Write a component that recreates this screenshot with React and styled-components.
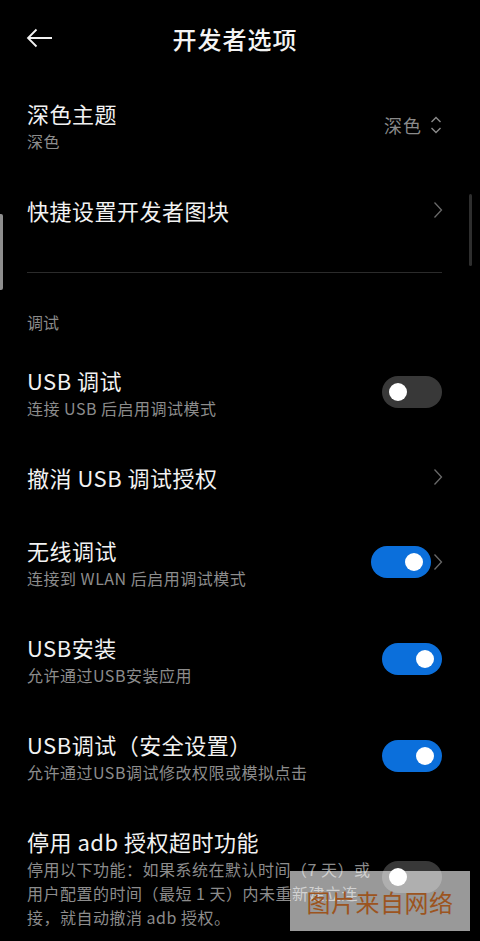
import styled, { createGlobalStyle } from 'styled-components';

const Global = createGlobalStyle`
  html, body {
    margin: 0;
    padding: 0;
    background: #000;
  }
  body {
    font-family: "Noto Sans CJK SC", "Noto Sans", sans-serif;
    color: #f2f2f2;
  }
`;

const Screen = styled.div`
  position: relative;
  width: 480px;
  height: 941px;
  overflow: hidden;
  background: #000;
`;

const Header = styled.header`
  display: flex;
  align-items: center;
  justify-content: center;
  position: relative;
  height: 76px;
  padding: 1px 10px 0 0;
  box-sizing: border-box;
`;

const BackButton = styled.div`
  position: absolute;
  left: 26px;
  top: 26px;
  width: 28px;
  height: 24px;
  display: flex;
  align-items: center;
`;

const Title = styled.h1`
  margin: 0;
  font-size: 24px;
  font-weight: 500;
  letter-spacing: 1px;
  color: #f4f4f4;
`;

const Row = styled.div`
  display: flex;
  align-items: center;
  padding: 20.5px 38px 20.5px 27px;
  gap: 8px;
`;

const RowText = styled.div`
  flex: 1;
  min-width: 0;
`;

const RowTitle = styled.div`
  font-size: 22px;
  line-height: 32px;
  letter-spacing: 0.5px;
  color: #f2f2f2;
`;

const RowSub = styled.div`
  font-size: 16px;
  line-height: 24px;
  letter-spacing: 0.5px;
  color: #8c8c8c;
`;

const SubLine = styled.span`
  display: block;
  white-space: nowrap;
`;

const Value = styled.div`
  display: flex;
  align-items: center;
  gap: 8px;
  font-size: 18px;
  letter-spacing: 1px;
  color: #8a8a8a;
`;

const Trail = styled.div`
  display: flex;
  align-items: center;
  gap: 2px;
  margin-right: ${(p) => (p.$chev ? '-1px' : '0')};
`;

const Divider = styled.div`
  height: 1px;
  margin: 26px 38px 0 27px;
  background: #2b2b2b;
`;

const SectionLabel = styled.div`
  padding: 37px 27px 9px;
  font-size: 16px;
  line-height: 24px;
  color: #8a8a8a;
`;

const Track = styled.div`
  width: 60px;
  height: 32px;
  border-radius: 16px;
  background: ${(p) => (p.$on ? '#0b6fdb' : '#383838')};
  display: flex;
  align-items: center;
  justify-content: ${(p) => (p.$on ? 'flex-end' : 'flex-start')};
  padding: 0 8px 0 7px;
  box-sizing: border-box;
  flex-shrink: 0;
`;

const Knob = styled.div`
  width: 18px;
  height: 18px;
  border-radius: 50%;
  background: #fff;
`;

const LeftBar = styled.div`
  position: absolute;
  left: 0;
  top: 214px;
  width: 3px;
  height: 76px;
  background: #8e8e8e;
  border-radius: 0 2px 2px 0;
`;

const ScrollBar = styled.div`
  position: absolute;
  right: 8px;
  top: 194px;
  width: 3px;
  height: 72px;
  border-radius: 2px;
  background: #2e2e2e;
`;

const Watermark = styled.div`
  position: absolute;
  left: 290px;
  top: 871px;
  width: 180px;
  height: 60px;
  background: rgba(255, 255, 255, 0.6);
  display: flex;
  align-items: center;
  justify-content: center;
  font-size: 24px;
  letter-spacing: 0.5px;
  color: #9c5420;
`;

function Chevron() {
  return (
    <svg width="10" height="18" viewBox="0 0 10 18" fill="none">
      <path d="M1.5 1.5L8.5 9L1.5 16.5" stroke="#6a6a6a" strokeWidth="1.3" />
    </svg>
  );
}

function UpDown() {
  return (
    <svg width="12" height="20" viewBox="0 0 12 20" fill="none">
      <path d="M1.5 7L6 2.5L10.5 7M1.5 13L6 17.5L10.5 13" stroke="#8a8a8a" strokeWidth="1.4" />
    </svg>
  );
}

function Toggle({ on }) {
  return (
    <Track $on={on}>
      <Knob />
    </Track>
  );
}

const items = [
  { title: 'USB 调试', sub: ['连接 USB 后启用调试模式'], toggle: false },
  { title: '撤消 USB 调试授权', chevron: true },
  { title: '无线调试', sub: ['连接到 WLAN 后启用调试模式'], toggle: true, chevron: true },
  { title: 'USB安装', sub: ['允许通过USB安装应用'], toggle: true },
  { title: 'USB调试（安全设置）', sub: ['允许通过USB调试修改权限或模拟点击'], toggle: true },
  {
    title: '停用 adb 授权超时功能',
    sub: [
      '停用以下功能：如果系统在默认时间（7 天）或',
      '用户配置的时间（最短 1 天）内未重新建立连',
      '接，就自动撤消 adb 授权。',
    ],
    toggle: false,
  },
];

export default function App() {
  return (
    <Screen>
      <Global />
      <Header>
        <BackButton>
          <svg width="27" height="20" viewBox="0 0 27 20" fill="none">
            <path d="M26 10H2M10.5 1.5L2 10L10.5 18.5" stroke="#f2f2f2" strokeWidth="1.8" />
          </svg>
        </BackButton>
        <Title>开发者选项</Title>
      </Header>

      <Row>
        <RowText>
          <RowTitle>深色主题</RowTitle>
          <RowSub>深色</RowSub>
        </RowText>
        <Value>
          深色
          <UpDown />
        </Value>
      </Row>
      <Row>
        <RowText>
          <RowTitle>快捷设置开发者图块</RowTitle>
        </RowText>
        <Trail $chev>
          <Chevron />
        </Trail>
      </Row>

      <Divider />
      <SectionLabel>调试</SectionLabel>

      {items.map((it) => (
        <Row key={it.title}>
          <RowText>
            <RowTitle>{it.title}</RowTitle>
            {it.sub && (
              <RowSub>
                {it.sub.map((line) => (
                  <SubLine key={line}>{line}</SubLine>
                ))}
              </RowSub>
            )}
          </RowText>
          <Trail $chev={it.chevron}>
            {it.toggle !== undefined && <Toggle on={it.toggle} />}
            {it.chevron && <Chevron />}
          </Trail>
        </Row>
      ))}

      <LeftBar />
      <ScrollBar />
      <Watermark>图片来自网络</Watermark>
    </Screen>
  );
}
